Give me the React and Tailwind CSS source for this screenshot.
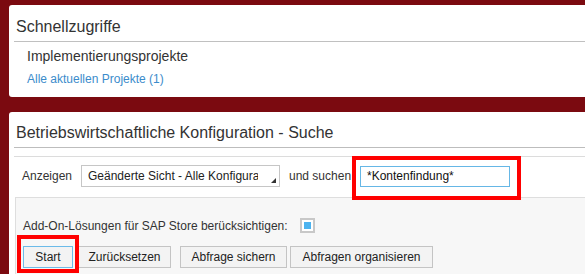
import React from "react";

function Btn({ children, className = "" }) {
  return (
    <div
      className={`shrink-0 h-[22px] flex items-center justify-center bg-[#f3f3f3] border text-[12px] leading-[14px] text-[#222] whitespace-nowrap ${className}`}
    >
      {children}
    </div>
  );
}

export default function App() {
  return (
    <div className="w-[585px] h-[274px] overflow-hidden bg-[#7b0a10] pl-[9px] pt-[5px] font-['Liberation_Sans',Arial,sans-serif]">
      {/* Card 1 */}
      <div className="bg-white rounded-l-[3px] h-[92px] pt-[13px] pl-[5px]">
        <div className="pl-[2px] text-[16px] leading-[18px] text-[#333]">Schnellzugriffe</div>
        <div className="mt-[5px] border-t border-[#c0c0c0]" />
        <div className="pl-[13px]">
          <div className="mt-[6px] text-[14px] leading-[16px] text-[#333]">Implementierungsprojekte</div>
          <div className="mt-[8px] text-[12px] leading-[14px] text-[#3b8ccb]">Alle aktuellen Projekte (1)</div>
        </div>
      </div>

      {/* Card 2 */}
      <div className="mt-[15px] bg-white rounded-tl-[3px] h-[162px] pt-[12px] pl-[5px]">
        <div className="pl-[2px] text-[16px] leading-[18px] text-[#333]">
          Betriebswirtschaftliche Konfiguration - Suche
        </div>
        <div className="mt-[5px] border-t border-[#bdbdbd]" />
        <div className="mt-[8px] border-t border-[#dcdcdc]" />

        <div className="mt-[8px] flex items-center text-[12px] leading-[14px] text-[#333] whitespace-nowrap">
          <div className="shrink-0 w-[67px] pl-[8px]">Anzeigen</div>
          <div className="shrink-0 relative w-[199px] h-[22px] border border-[#c6c6c6] bg-white flex items-center pl-[6px]">
            <div className="w-[170px] overflow-hidden whitespace-nowrap text-[#222]">
              Geänderte Sicht - Alle Konfigurationen
            </div>
            <svg className="absolute right-[3px] bottom-[3px]" width="5" height="5" viewBox="0 0 5 5">
              <polygon points="5,0 5,5 0,5" fill="#333" />
            </svg>
          </div>
          <div className="shrink-0 w-[80px] pl-[9px]">und suchen</div>
          <div className="shrink-0 relative">
            <div className="w-[150px] h-[21px] border border-[#66b7e6] bg-white flex items-center pl-[6px] text-[#111]">
              *Kontenfindung*
            </div>
            <div className="absolute left-[-8px] top-[-10px] w-[169px] h-[44px] border-[4px] border-[#ff0000]" />
          </div>
        </div>

        <div className="mt-[10px] ml-[1px] h-[80px] border-t border-l border-[#dedede] bg-[#f7f7f7] pl-[7px] pt-[20px]">
          <div className="flex items-center gap-[12px] text-[12px] leading-[14px] text-[#333] whitespace-nowrap">
            <div>Add-On-Lösungen für SAP Store berücksichtigen:</div>
            <div className="shrink-0 w-[15px] h-[15px] border-2 border-[#c8c8c8] bg-white p-[2px]">
              <div className="w-[7px] h-[7px] bg-[#4cb3ef]" />
            </div>
          </div>
          <div className="mt-[13px] flex">
            <div className="shrink-0 relative">
              <Btn className="w-[50px] border-[#6cbbe9]">Start</Btn>
              <div className="absolute left-[-6px] top-[-11px] w-[62px] h-[38px] border-[4px] border-[#ff0000]" />
            </div>
            <Btn className="ml-[5px] w-[93px] border-[#c4c4c4]">Zurücksetzen</Btn>
            <Btn className="ml-[9px] w-[107px] border-[#c4c4c4]">Abfrage sichern</Btn>
            <Btn className="ml-[3px] w-[143px] border-[#c4c4c4]">Abfragen organisieren</Btn>
          </div>
        </div>
      </div>
    </div>
  );
}
